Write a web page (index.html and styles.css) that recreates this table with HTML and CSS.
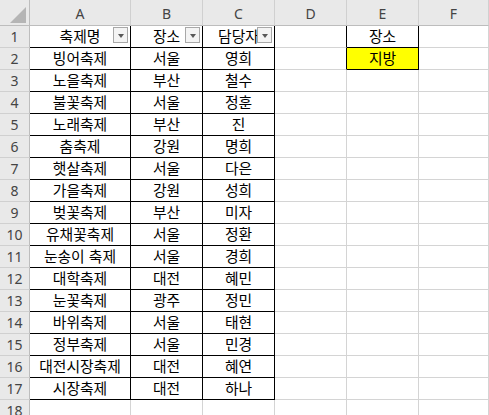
FILE: index.html
```html
<!DOCTYPE html>
<html lang="ko">
<head>
<meta charset="utf-8">
<title>Sheet</title>
<link rel="stylesheet" href="styles.css">
</head>
<body>
<div class="sheet">
  <div class="hd corner"><svg class="corner-tri" width="16" height="16" viewBox="0 0 16 16"><polygon points="16,0 16,16 0,16" fill="#b5b5b5"/></svg></div>
  <div class="hd ch">A</div><div class="hd ch">B</div><div class="hd ch">C</div><div class="hd ch">D</div><div class="hd ch">E</div><div class="hd ch">F</div>

  <div class="hd rh">1</div>
  <div class="c b">축제명<span class="dd"><i></i></span></div>
  <div class="c b">장소<span class="dd"><i></i></span></div>
  <div class="c b">담당자<span class="dd"><i></i></span></div>
  <div class="c br"></div>
  <div class="c b">장소</div>
  <div class="c"></div>

  <div class="hd rh">2</div>
  <div class="c b">빙어축제</div><div class="c b">서울</div><div class="c b">영희</div><div class="c br"></div><div class="c b yellow">지방</div><div class="c"></div>

  <div class="hd rh">3</div>
  <div class="c b">노을축제</div><div class="c b">부산</div><div class="c b">철수</div><div class="c"></div><div class="c"></div><div class="c"></div>

  <div class="hd rh">4</div>
  <div class="c b">불꽃축제</div><div class="c b">서울</div><div class="c b">정훈</div><div class="c"></div><div class="c"></div><div class="c"></div>

  <div class="hd rh">5</div>
  <div class="c b">노래축제</div><div class="c b">부산</div><div class="c b">진</div><div class="c"></div><div class="c"></div><div class="c"></div>

  <div class="hd rh">6</div>
  <div class="c b">춤축제</div><div class="c b">강원</div><div class="c b">명희</div><div class="c"></div><div class="c"></div><div class="c"></div>

  <div class="hd rh">7</div>
  <div class="c b">햇살축제</div><div class="c b">서울</div><div class="c b">다은</div><div class="c"></div><div class="c"></div><div class="c"></div>

  <div class="hd rh">8</div>
  <div class="c b">가을축제</div><div class="c b">강원</div><div class="c b">성희</div><div class="c"></div><div class="c"></div><div class="c"></div>

  <div class="hd rh">9</div>
  <div class="c b">벚꽃축제</div><div class="c b">부산</div><div class="c b">미자</div><div class="c"></div><div class="c"></div><div class="c"></div>

  <div class="hd rh">10</div>
  <div class="c b">유채꽃축제</div><div class="c b">서울</div><div class="c b">정환</div><div class="c"></div><div class="c"></div><div class="c"></div>

  <div class="hd rh">11</div>
  <div class="c b">눈송이 축제</div><div class="c b">서울</div><div class="c b">경희</div><div class="c"></div><div class="c"></div><div class="c"></div>

  <div class="hd rh">12</div>
  <div class="c b">대학축제</div><div class="c b">대전</div><div class="c b">혜민</div><div class="c"></div><div class="c"></div><div class="c"></div>

  <div class="hd rh">13</div>
  <div class="c b">눈꽃축제</div><div class="c b">광주</div><div class="c b">정민</div><div class="c"></div><div class="c"></div><div class="c"></div>

  <div class="hd rh">14</div>
  <div class="c b">바위축제</div><div class="c b">서울</div><div class="c b">태현</div><div class="c"></div><div class="c"></div><div class="c"></div>

  <div class="hd rh">15</div>
  <div class="c b">정부축제</div><div class="c b">서울</div><div class="c b">민경</div><div class="c"></div><div class="c"></div><div class="c"></div>

  <div class="hd rh">16</div>
  <div class="c b">대전시장축제</div><div class="c b">대전</div><div class="c b">혜연</div><div class="c"></div><div class="c"></div><div class="c"></div>

  <div class="hd rh">17</div>
  <div class="c b">시장축제</div><div class="c b">대전</div><div class="c b">하나</div><div class="c"></div><div class="c"></div><div class="c"></div>

  <div class="hd rh">18</div>
  <div class="c"></div><div class="c"></div><div class="c"></div><div class="c"></div><div class="c"></div><div class="c"></div>
</div>
</body>
</html>
```
FILE: styles.css
```css
html, body {
  margin: 0;
  padding: 0;
  background: #ffffff;
  overflow: hidden;
}

body {
  width: 489px;
  height: 415px;
  font-family: "Noto Sans CJK KR", "Noto Sans", sans-serif;
}

.sheet {
  display: grid;
  grid-template-columns: 30px 101px 72px 72px 72px 72px minmax(0, 1fr);
  grid-template-rows: 26px;
  grid-auto-rows: 22px;
  width: 489px;
}

.hd {
  background: #e9e9e9;
  color: #444444;
  font-family: "Noto Sans", "Noto Sans CJK KR", sans-serif;
  font-size: 14px;
  box-sizing: border-box;
  display: flex;
  align-items: center;
  justify-content: center;
}

.corner {
  border-right: 1px solid #bdbdbd;
  border-bottom: 1px solid #bdbdbd;
  align-items: flex-end;
  justify-content: flex-end;
  padding: 0 3px 2px 0;
}

.corner-tri {
  display: block;
}

.ch {
  border-right: 1px solid #d0d0d0;
  border-bottom: 1px solid #bdbdbd;
  padding-top: 1px;
}

.rh {
  border-right: 1px solid #bdbdbd;
  border-bottom: 1px solid #d0d0d0;
}

.c {
  position: relative;
  box-sizing: border-box;
  border-right: 1px solid #d4d4d4;
  border-bottom: 1px solid #d4d4d4;
  display: flex;
  align-items: center;
  justify-content: center;
  font-size: 14.8px;
  color: #000000;
  white-space: nowrap;
  line-height: 1;
  padding-bottom: 1px;
}

.c.b {
  border-right-color: #000000;
  border-bottom-color: #000000;
}

.c.br {
  border-right-color: #000000;
}

.yellow {
  background: #ffff00;
}

.dd {
  position: absolute;
  right: 2px;
  top: 1px;
  width: 15px;
  height: 16px;
  box-sizing: border-box;
  border: 1px solid #a8a8a8;
  background: #f4f4f4;
  display: flex;
  align-items: center;
  justify-content: center;
}

.dd i {
  display: block;
  width: 0;
  height: 0;
  border-left: 3.5px solid transparent;
  border-right: 3.5px solid transparent;
  border-top: 4px solid #595959;
  margin-top: 1px;
}
```
